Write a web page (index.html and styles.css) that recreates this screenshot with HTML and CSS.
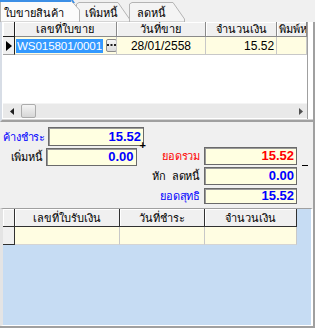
FILE: index.html
```html
<!DOCTYPE html>
<html lang="th">
<head>
<meta charset="utf-8">
<link rel="stylesheet" href="styles.css">
</head>
<body>
<div class="tabs">
  <div class="tab tab-active">
    <svg class="tab-shape" width="80" height="22" viewBox="0 0 80 22"><polygon points="0.5,22 0.5,0.5 71,0.5 79.5,10 79.5,22" fill="#fbfbfb" stroke="#b4b4b4"/><rect x="0" y="0" width="71" height="2" fill="#3c8fe6"/><polygon points="71,0 73,0 75,3 73,3" fill="#3c8fe6"/></svg>
    <span class="tab-label">ใบขายสินค้า</span>
  </div>
  <div class="tab tab-2">
    <svg class="tab-shape" width="54" height="22" viewBox="0 0 54 22"><polygon points="0.5,22 0.5,4 3,2.5 42,2.5 53.5,19 53.5,22" fill="#f4f4f4" stroke="#b4b4b4"/></svg>
    <span class="tab-label">เพิ่มหนี้</span>
  </div>
  <div class="tab tab-3">
    <svg class="tab-shape" width="56" height="22" viewBox="0 0 56 22"><polygon points="0.5,22 0.5,4 3,2.5 44,2.5 55.5,19 55.5,22" fill="#f4f4f4" stroke="#b4b4b4"/></svg>
    <span class="tab-label">ลดหนี้</span>
  </div>
</div>

<div class="page">
  <div class="top-area">
    <div class="grid1">
      <div class="grow ghead">
        <div class="cell gut"></div>
        <div class="cell w1">เลขที่ใบขาย</div>
        <div class="cell w2">วันที่ขาย</div>
        <div class="cell w3">จำนวนเงิน</div>
        <div class="cell w4 clip">พิมพ์ห</div>
      </div>
      <div class="grow gdata">
        <div class="cell gut"><svg width="6" height="10" viewBox="0 0 6 10"><polygon points="0,0 6,5 0,10" fill="#000"/></svg></div>
        <div class="cell w1 left"><span class="sel">WS015801/0001</span><span class="dots"><svg width="9" height="3" viewBox="0 0 9 3"><rect x="0" y="0" width="2" height="2" fill="#222"/><rect x="3.5" y="0" width="2" height="2" fill="#222"/><rect x="7" y="0" width="2" height="2" fill="#222"/></svg></span></div>
        <div class="cell w2">28/01/2558</div>
        <div class="cell w3 right">15.52</div>
        <div class="cell w4"></div>
      </div>
      <div class="gfill"></div>
      <div class="hscroll">
        <svg class="arrow" width="4" height="7" viewBox="0 0 4 7"><polygon points="4,0 0,3.5 4,7" fill="#202020"/></svg>
        <div class="thumb"></div>
        <div class="track"></div>
        <svg class="arrow" width="4" height="7" viewBox="0 0 4 7"><polygon points="0,0 4,3.5 0,7" fill="#505050"/></svg>
      </div>
    </div>
  </div>

  <div class="summary">
    <div class="sum-left">
      <div class="frow l1">
        <span class="flabel blue">ค้างชำระ</span>
        <span class="fbox blue">15.52</span>
      </div>
      <div class="frow l2">
        <span class="flabel">เพิ่มหนี้</span>
        <span class="fbox blue">0.00</span>
        <span class="plus">+</span>
      </div>
    </div>
    <div class="sum-right">
      <div class="frow r1">
        <span class="flabel2 red">ยอดรวม</span>
        <span class="fbox2 red">15.52</span>
        <span class="minus"></span>
      </div>
      <div class="frow r2">
        <span class="flabel2">หัก&nbsp;&nbsp;ลดหนี้</span>
        <span class="fbox2 blue">0.00</span>
      </div>
      <div class="frow r3">
        <span class="flabel2 blue">ยอดสุทธิ</span>
        <span class="fbox2 blue">15.52</span>
      </div>
    </div>
  </div>

  <div class="grid2">
    <div class="grow2 ghead2">
      <div class="cell2 gut2"></div>
      <div class="cell2 v1">เลขที่ใบรับเงิน</div>
      <div class="cell2 v2">วันที่ชำระ</div>
      <div class="cell2 v3">จำนวนเงิน</div>
    </div>
    <div class="grow2 gdata2">
      <div class="cell2 gut2"></div>
      <div class="cell2 v1"></div>
      <div class="cell2 v2"></div>
      <div class="cell2 v3"></div>
    </div>
  </div>
</div>
</body>
</html>
```

FILE: styles.css
```css
* { box-sizing: border-box; }
html, body { margin: 0; padding: 0; }
body {
  width: 315px;
  height: 328px;
  overflow: hidden;
  background: #f0f0f0;
  font-family: Tahoma, "Liberation Sans", "Noto Sans", sans-serif;
  font-size: 12px;
  line-height: 14px;
  color: #000;
}

/* tabs */
.tabs {
  display: flex;
  height: 22px;
  overflow: hidden;
}
.tab {
  position: relative;
  height: 22px;
  display: flex;
  align-items: center;
  font-size: 11px;
}
.tab-shape { position: absolute; left: 0; top: 0; }
.tab-label { position: relative; line-height: 14px; padding-top: 3px; white-space: nowrap; }
.tab-active { width: 76px; z-index: 2; padding-left: 4px; }
.tab-2 { width: 53px; padding-left: 9px; }
.tab-3 { width: 56px; padding-left: 8px; }

/* page */
.page {
  height: 306px;
  width: 315px;
  border-right: 2px solid #a0a0a0;
  border-bottom: 2px solid #a0a0a0;
  display: flex;
  flex-direction: column;
}

.top-area {
  height: 100px;
  flex: none;
  background: #fff;
  border-left: 2px solid #d7dde6;
  border-bottom: 2px solid #a0a0a0;
  box-shadow: inset 0 -1px 0 #d4d4d4;
}
.grid1 {
  width: 306px;
  height: 97px;
  border-left: 1px solid #fff;
  border-right: 1px solid #a0a0a0;
  display: flex;
  flex-direction: column;
}
.grow { display: flex; flex: none; }
.cell {
  display: flex;
  align-items: center;
  justify-content: center;
  white-space: nowrap;
  overflow: hidden;
}
.ghead { height: 15px; }
.ghead .cell {
  background: #f0f0f0;
  border-right: 1px solid #8a8a8a;
  border-bottom: 1px solid #8a8a8a;
  box-shadow: inset 1px 1px 0 #fff;
  font-size: 11px;
}
.ghead .gut { border-right-color: #202020; border-bottom-color: #202020; }
.gdata { height: 18px; }
.gdata .cell {
  background: #fffde2;
  border-right: 1px solid #c8c8c8;
  border-bottom: 1px solid #c8c8c8;
  font-family: "Liberation Sans", Arial, sans-serif;
  font-size: 12px;
}
.gdata .gut {
  background: #f0f0f0;
  border-right: 1px solid #202020;
  border-bottom: 1px solid #a0a0a0;
  justify-content: flex-start;
  padding-left: 3px;
}
.gut { width: 12px; }
.w1 { width: 102px; }
.w2 { width: 90px; }
.w3 { width: 71px; }
.w4 { width: 30px; }
.clip { justify-content: flex-start; padding-left: 2px; }
.cell.left { justify-content: flex-start; padding-left: 1px; }
.cell.right { justify-content: flex-end; padding-right: 2px; }
.sel {
  background: #3399ff;
  color: #fff;
  padding: 0 1px;
  line-height: 14px;
  font-size: 11.6px;
  letter-spacing: -0.1px;
}
.dots {
  margin-left: 3px;
  width: 12px;
  height: 13px;
  border: 1px solid #8c8c8c;
  border-radius: 2px;
  background: linear-gradient(#f6f6f6, #dadada);
  display: flex;
  align-items: center;
  justify-content: center;
}
.gfill { flex: 1; }
.hscroll {
  height: 15px;
  flex: none;
  background: #e9e9e9;
  border-top: 1px solid #f4f4f4;
  display: flex;
  align-items: center;
  padding: 0 4px 0 7px;
  margin-bottom: 1px;
}
.hscroll .arrow { flex: none; }
.thumb {
  margin-left: 7px;
  width: 15px;
  height: 14px;
  border: 1px solid #acacac;
  border-radius: 2px;
  background: linear-gradient(#f4f4f4, #d6d6d6);
}
.track { flex: 1; }

/* summary */
.summary {
  height: 86px;
  flex: none;
  display: flex;
}
.sum-left {
  width: 146px;
  padding-top: 5px;
  display: flex;
  flex-direction: column;
}
.frow { display: flex; align-items: center; flex: none; }
.l1 { height: 19px; }
.l2 { height: 18px; margin-top: 2px; }
.flabel {
  width: 46px;
  text-align: right;
  padding-right: 1px;
  font-size: 11px;
  letter-spacing: -0.2px;
  line-height: 14px;
  white-space: nowrap;
}
.fbox, .fbox2 {
  height: 100%;
  background: #ffffe1;
  border: 1px solid #6a6a6a;
  box-shadow: inset 1px 1px 0 #9a9a9a;
  font-family: "Liberation Sans", Arial, sans-serif;
  font-weight: bold;
  font-size: 13px;
  text-align: right;
  padding-right: 2px;
  display: flex;
  align-items: center;
  justify-content: flex-end;
}
.fbox { width: 96px; margin-left: 2px; }
.plus {
  align-self: flex-start;
  margin-top: -8px;
  margin-left: 3px;
  font-family: "Liberation Sans", sans-serif;
  font-weight: bold;
  font-size: 11px;
  line-height: 10px;
}
.sum-right {
  padding-top: 25px;
  display: flex;
  flex-direction: column;
}
.flabel2 {
  width: 54px;
  text-align: right;
  font-size: 11px;
  letter-spacing: -0.2px;
  line-height: 14px;
  white-space: nowrap;
}
.fbox2 { width: 93px; margin-left: 4px; }
.r1 { height: 18px; }
.r2 { height: 18px; margin-top: 2px; }
.r3 { height: 16px; margin-top: 3px; }
.minus {
  align-self: flex-end;
  width: 6px;
  height: 1px;
  background: #000;
  margin-left: 5px;
  margin-bottom: -1px;
}
.blue { color: #0000ff; }
.red { color: #ff0000; }

/* bottom grid */
.grid2 {
  flex: 1;
  background: #c6dcf3;
  border-top: 1px solid #a0a0a0;
  border-left: 3px solid #e4e4e4;
  border-right: 2px solid #fff;
  border-bottom: 1px solid #fff;
}
.grow2 { display: flex; }
.cell2 {
  display: flex;
  align-items: center;
  justify-content: center;
  white-space: nowrap;
  font-size: 11px;
}
.ghead2 { height: 18px; }
.ghead2 .cell2 {
  background: #f0f0f0;
  border-right: 1px solid #303030;
  border-bottom: 1px solid #303030;
  box-shadow: inset 1px 1px 0 #fff;
}
.gdata2 { height: 18px; }
.gdata2 .cell2 {
  background: #fffde2;
  border-right: 1px solid #c8c8c8;
  border-bottom: 1px solid #d4d4d4;
}
.gdata2 .gut2 {
  background: #f0f0f0;
  border-right: 1px solid #303030;
  border-bottom: 1px solid #303030;
}
.gut2 { width: 12px; }
.v1 { width: 105px; }
.v2 { width: 85px; }
.v3 { width: 92px; }
```
